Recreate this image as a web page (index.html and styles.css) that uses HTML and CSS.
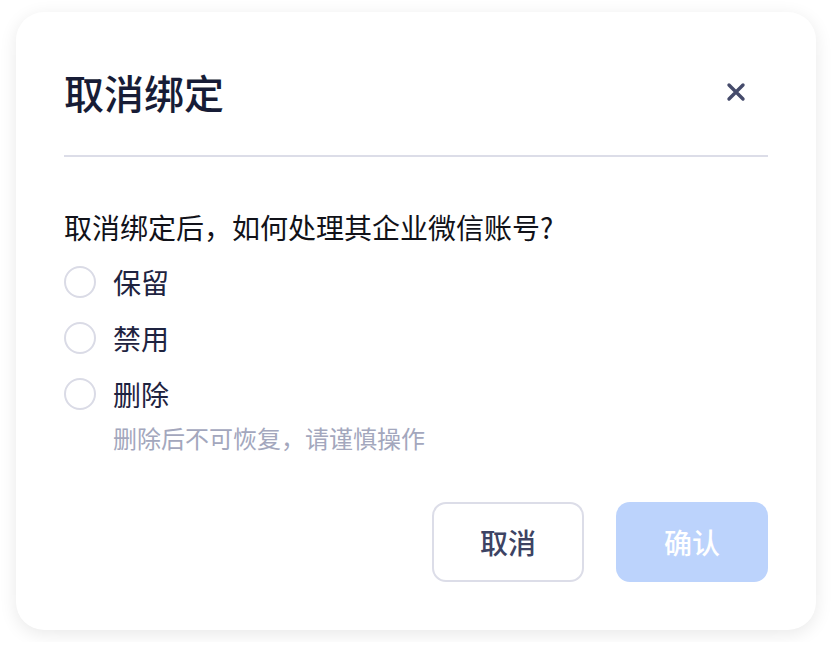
FILE: index.html
```html
<!DOCTYPE html>
<html lang="zh-CN">
<head>
<meta charset="utf-8">
<title>取消绑定</title>
<link rel="stylesheet" href="styles.css">
</head>
<body>
<div class="dialog">
  <div class="header">
    <h1 class="title">取消绑定</h1>
    <button class="close" aria-label="关闭">
      <svg width="20" height="20" viewBox="0 0 20 20"><path d="M3 3L17 17M17 3L3 17" stroke="#454b6b" stroke-width="3.4" stroke-linecap="round"/></svg>
    </button>
  </div>
  <div class="divider"></div>
  <p class="question">取消绑定后，如何处理其企业微信账号?</p>
  <div class="options">
    <label class="option"><span class="radio"></span><span class="label">保留</span></label>
    <label class="option"><span class="radio"></span><span class="label">禁用</span></label>
    <label class="option"><span class="radio"></span><span class="label">删除</span></label>
    <div class="hint">删除后不可恢复，请谨慎操作</div>
  </div>
  <div class="footer">
    <button class="btn btn-cancel">取消</button>
    <button class="btn btn-confirm">确认</button>
  </div>
</div>
</body>
</html>
```
FILE: styles.css
```css
* { box-sizing: border-box; }
html, body { margin: 0; padding: 0; background: #ffffff; }
body {
  padding: 12px 16px;
  font-family: "Noto Sans CJK SC", "Noto Sans", sans-serif;
}
.dialog {
  width: 800px;
  height: 618px;
  background: #fff;
  border-radius: 28px;
  box-shadow: 0 4px 18px rgba(0, 0, 0, 0.09);
  padding: 48px 48px 48px 48px;
  display: flex;
  flex-direction: column;
}
.header {
  height: 64px;
  display: flex;
  align-items: center;
  justify-content: space-between;
}
.title {
  margin: 0;
  font-size: 40px;
  font-weight: 500;
  color: #171c36;
  line-height: 64px;
}
.close {
  border: 0;
  background: none;
  padding: 0;
  width: 20px;
  height: 20px;
  margin-right: 22px;
  display: flex;
}
.divider {
  height: 2px;
  background: #dcdde8;
  margin-top: 31px;
}
.question {
  margin: 50px 0 0 0;
  font-size: 28px;
  line-height: 40px;
  color: #111219;
}
.options {
  margin-top: 7px;
  display: flex;
  flex-direction: column;
}
.option {
  height: 56px;
  display: flex;
  align-items: center;
  gap: 17px;
}
.radio {
  width: 32px;
  height: 32px;
  border-radius: 50%;
  border: 2px solid #dadbe6;
  flex: none;
}
.label {
  font-size: 28px;
  color: #1e2340;
  line-height: 40px;
}
.hint {
  margin-left: 49px;
  font-size: 24px;
  line-height: 32px;
  color: #a3a7bd;
}
.footer {
  margin-top: 48px;
  display: flex;
  justify-content: flex-end;
  gap: 32px;
}
.btn {
  width: 152px;
  height: 80px;
  border-radius: 14px;
  font-family: "Noto Sans CJK SC", "Noto Sans", sans-serif;
  font-size: 28px;
  font-weight: 500;
  padding: 0;
}
.btn-cancel {
  background: #fff;
  border: 2px solid #dcdde8;
  color: #3d4363;
}
.btn-confirm {
  background: #bcd3fc;
  border: 0;
  color: #ffffff;
}
```
